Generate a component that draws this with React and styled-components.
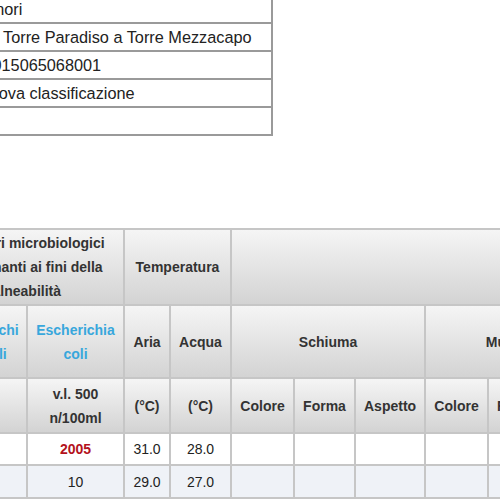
import React from 'react';
import styled, { createGlobalStyle } from 'styled-components';

const GlobalStyle = createGlobalStyle`
  html, body {
    margin: 0;
    padding: 0;
    background: #fff;
    overflow: hidden;
  }
  body {
    font-family: "Liberation Sans", Arial, sans-serif;
  }
`;

// the page is a crop of a wider sheet, so it starts left of the viewport
const Page = styled.div`
  width: 800px;
  margin: -6px 0 0 -80px;
  display: flex;
  flex-direction: column;
  gap: 92px;
`;

const InfoTable = styled.table`
  margin-left: 51px;
  width: 302px;
  border-collapse: collapse;
  border: 2px solid #9a9a9a;
  font-size: 16.3px;
  color: #222;

  td {
    height: 26px;
    padding: 0 5px;
    border: 2px solid #9a9a9a;
    white-space: nowrap;
    overflow: hidden;
  }
`;

const DataTable = styled.table`
  table-layout: fixed;
  width: 698px;
  border-collapse: collapse;
  font-size: 14px;
  color: #222;
`;

const HeadCell = styled.th`
  height: ${(p) => p.$h}px;
  padding: 0 8px;
  border: 2px solid #c6c6c6;
  background: linear-gradient(#f5f5f5, #d3d3d3);
  color: ${(p) => (p.$blue ? '#38a7dc' : '#333')};
  font-weight: bold;
  line-height: 24px;
  text-align: center;
  vertical-align: middle;
`;

const Row = styled.tr`
  background: ${(p) => (p.$alt ? '#eff2f7' : '#fff')};
`;

const Cell = styled.td`
  height: ${(p) => p.$h}px;
  padding: 0 6px;
  border: 2px solid #c6c6c6;
  text-align: center;
  color: ${(p) => (p.$red ? '#b3121c' : '#222')};
  font-weight: ${(p) => (p.$red ? 'bold' : 'normal')};
`;

const colWidths = [106, 97, 46, 61, 63, 61, 70, 63, 61, 70];

const info = [
  'Minori',
  'Da Torre Paradiso a Torre Mezzacapo',
  'IT015065068001',
  'Nuova classificazione',
  '',
];

const rows = [
  { ent: '20', esc: '2005', aria: '31.0', acqua: '28.0', red: true, h: 30 },
  { ent: '10', esc: '10', aria: '29.0', acqua: '27.0', h: 31 },
];

const aspects = ['Colore', 'Forma', 'Aspetto', 'Colore', 'Forma', 'Aspetto'];

export default function App() {
  return (
    <>
      <GlobalStyle />
      <Page>
        <InfoTable>
          <tbody>
            {info.map((t, i) => (
              <tr key={i}>
                <td>{t}</td>
              </tr>
            ))}
          </tbody>
        </InfoTable>

        <DataTable>
          <colgroup>
            {colWidths.map((w, i) => (
              <col key={i} style={{ width: w }} />
            ))}
          </colgroup>
          <thead>
            <tr>
              <HeadCell $h={74} colSpan={2}>
                Parametri microbiologici determinanti ai fini della balneabilità
              </HeadCell>
              <HeadCell $h={74} colSpan={2}>Temperatura</HeadCell>
              <HeadCell $h={74} colSpan={6}></HeadCell>
            </tr>
            <tr>
              <HeadCell $h={71} $blue>Enterococchi intestinali</HeadCell>
              <HeadCell $h={71} $blue>Escherichia coli</HeadCell>
              <HeadCell $h={71}>Aria</HeadCell>
              <HeadCell $h={71}>Acqua</HeadCell>
              <HeadCell $h={71} colSpan={3}>Schiuma</HeadCell>
              <HeadCell $h={71} colSpan={3}>Mucillagini</HeadCell>
            </tr>
            <tr>
              <HeadCell $h={53}>v.l. 200 n/100ml</HeadCell>
              <HeadCell $h={53}>v.l. 500 n/100ml</HeadCell>
              <HeadCell $h={53}>(°C)</HeadCell>
              <HeadCell $h={53}>(°C)</HeadCell>
              {aspects.map((a, i) => (
                <HeadCell key={i} $h={53}>{a}</HeadCell>
              ))}
            </tr>
          </thead>
          <tbody>
            {rows.map((r, i) => (
              <Row key={i} $alt={i % 2 === 1}>
                <Cell $h={r.h}>{r.ent}</Cell>
                <Cell $h={r.h} $red={r.red}>{r.esc}</Cell>
                <Cell $h={r.h}>{r.aria}</Cell>
                <Cell $h={r.h}>{r.acqua}</Cell>
                {aspects.map((a, j) => (
                  <Cell key={j} $h={r.h}></Cell>
                ))}
              </Row>
            ))}
          </tbody>
        </DataTable>
      </Page>
    </>
  );
}
